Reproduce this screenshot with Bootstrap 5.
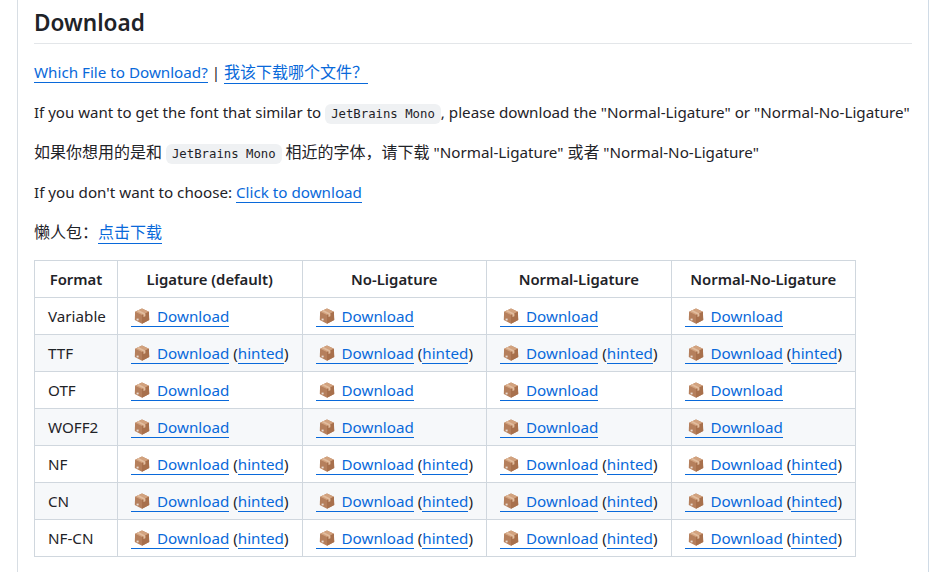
<!DOCTYPE html>
<html lang="en"><head><meta charset="utf-8"><title>Download</title>
<link href="https://cdn.jsdelivr.net/npm/bootstrap@5.3.0/dist/css/bootstrap.min.css" rel="stylesheet">
<style>
html,body{height:572px;overflow:hidden;background:#fff}
body{font-family:"Noto Sans","Noto Sans CJK SC",sans-serif;font-size:15.2px;line-height:24px;color:#1f2328}
.doc-shell{margin:-18px 13px 0 17px;padding:18px 16px 0;border-left:1px solid #d8dee4;border-right:1px solid #d0dbe6;height:600px;box-sizing:border-box;width:912px}
.doc-title{font-size:22.6px;font-weight:600;line-height:30px;margin:0 0 16px;padding:8px 0 5px;border-bottom:1px solid #e3e6e9;color:#1f2328}
.doc-shell p{margin:0 0 16px;white-space:nowrap;height:24px}
.zh{font-size:16px}
.lead-in{font-size:15.05px}
.doc-shell a{color:#0969da;text-decoration:none;border-bottom:1px solid #0969da}
.doc-shell code{font-family:"DejaVu Sans Mono","Liberation Mono",monospace;font-size:12.3px;background:#eff1f3;border-radius:6px;padding:3px 6px;color:#1f2328}
.dl-table{table-layout:fixed;width:821px;border-collapse:collapse;margin:0;color:#1f2328;font-size:15.2px}
.dl-table th,.dl-table td{border:1px solid #d0d7de;padding:6px 13px;line-height:24px;white-space:nowrap;background:#fff}
.dl-table th{text-align:center;font-weight:600;font-size:14.9px;padding-left:0;padding-right:0}
.dl-table tbody tr:nth-child(even) td{background:#f6f8fa}
.pkg{width:16px;height:16px;vertical-align:-2px;margin:0 7px 0 3px}
.w1{width:83px}.w2{width:184.5px}
</style></head><body>
<svg width="0" height="0" class="d-block"><defs><symbol id="pk" viewBox="0 0 16 16">
<path d="M8 .6 14.9 3.7 15.2 12 8 15.8.8 12 1.1 3.7z" fill="#b57f5c"/>
<path d="M8 .6 14.9 3.7 8 7 1.1 3.7z" fill="#d2a27e"/>
<path d="M8 7 14.9 3.7 15.2 12 8 15.8z" fill="#a8704c"/>
<path d="M4.4 2.1 11.4 5.4v2.8l-1.9.9V6.4L2.8 3z" fill="#e2bd9f"/>
<rect x="2.6" y="10.6" width="2" height="1.8" fill="#e9dcd3"/>
</symbol></defs></svg>
<main class="doc-shell">
<h2 class="doc-title">Download</h2>
<p><a href="#">Which File to Download?</a> | <a href="#" class="zh">我该下载哪个文件？</a></p>
<p><span class="lead-in">If you want to get the font that similar to </span><code>JetBrains Mono</code>, please download the "Normal-Ligature" or "Normal-No-Ligature"</p>
<p><span class="zh">如果你想用的是和</span> <code>JetBrains Mono</code> <span class="zh">相近的字体，请下载</span> "Normal-Ligature" <span class="zh">或者</span> "Normal-No-Ligature"</p>
<p>If you don't want to choose: <a href="#">Click to download</a></p>
<p><span class="zh">懒人包：</span><a href="#" class="zh">点击下载</a></p>
<table class="table dl-table">
<thead><tr><th class="w1">Format</th><th class="w2">Ligature (default)</th><th class="w2">No-Ligature</th><th class="w2">Normal-Ligature</th><th class="w2">Normal-No-Ligature</th></tr></thead>
<tbody>
<tr><td>Variable</td><td><a href="#"><svg class="pkg"><use href="#pk"/></svg>Download</a></td><td><a href="#"><svg class="pkg"><use href="#pk"/></svg>Download</a></td><td><a href="#"><svg class="pkg"><use href="#pk"/></svg>Download</a></td><td><a href="#"><svg class="pkg"><use href="#pk"/></svg>Download</a></td></tr>
<tr><td>TTF</td><td><a href="#"><svg class="pkg"><use href="#pk"/></svg>Download</a> (<a href="#">hinted</a>)</td><td><a href="#"><svg class="pkg"><use href="#pk"/></svg>Download</a> (<a href="#">hinted</a>)</td><td><a href="#"><svg class="pkg"><use href="#pk"/></svg>Download</a> (<a href="#">hinted</a>)</td><td><a href="#"><svg class="pkg"><use href="#pk"/></svg>Download</a> (<a href="#">hinted</a>)</td></tr>
<tr><td>OTF</td><td><a href="#"><svg class="pkg"><use href="#pk"/></svg>Download</a></td><td><a href="#"><svg class="pkg"><use href="#pk"/></svg>Download</a></td><td><a href="#"><svg class="pkg"><use href="#pk"/></svg>Download</a></td><td><a href="#"><svg class="pkg"><use href="#pk"/></svg>Download</a></td></tr>
<tr><td>WOFF2</td><td><a href="#"><svg class="pkg"><use href="#pk"/></svg>Download</a></td><td><a href="#"><svg class="pkg"><use href="#pk"/></svg>Download</a></td><td><a href="#"><svg class="pkg"><use href="#pk"/></svg>Download</a></td><td><a href="#"><svg class="pkg"><use href="#pk"/></svg>Download</a></td></tr>
<tr><td>NF</td><td><a href="#"><svg class="pkg"><use href="#pk"/></svg>Download</a> (<a href="#">hinted</a>)</td><td><a href="#"><svg class="pkg"><use href="#pk"/></svg>Download</a> (<a href="#">hinted</a>)</td><td><a href="#"><svg class="pkg"><use href="#pk"/></svg>Download</a> (<a href="#">hinted</a>)</td><td><a href="#"><svg class="pkg"><use href="#pk"/></svg>Download</a> (<a href="#">hinted</a>)</td></tr>
<tr><td>CN</td><td><a href="#"><svg class="pkg"><use href="#pk"/></svg>Download</a> (<a href="#">hinted</a>)</td><td><a href="#"><svg class="pkg"><use href="#pk"/></svg>Download</a> (<a href="#">hinted</a>)</td><td><a href="#"><svg class="pkg"><use href="#pk"/></svg>Download</a> (<a href="#">hinted</a>)</td><td><a href="#"><svg class="pkg"><use href="#pk"/></svg>Download</a> (<a href="#">hinted</a>)</td></tr>
<tr><td>NF-CN</td><td><a href="#"><svg class="pkg"><use href="#pk"/></svg>Download</a> (<a href="#">hinted</a>)</td><td><a href="#"><svg class="pkg"><use href="#pk"/></svg>Download</a> (<a href="#">hinted</a>)</td><td><a href="#"><svg class="pkg"><use href="#pk"/></svg>Download</a> (<a href="#">hinted</a>)</td><td><a href="#"><svg class="pkg"><use href="#pk"/></svg>Download</a> (<a href="#">hinted</a>)</td></tr>
</tbody></table>
</main>
<script src="https://cdn.jsdelivr.net/npm/bootstrap@5.3.0/dist/js/bootstrap.bundle.min.js"></script>
</body></html>
